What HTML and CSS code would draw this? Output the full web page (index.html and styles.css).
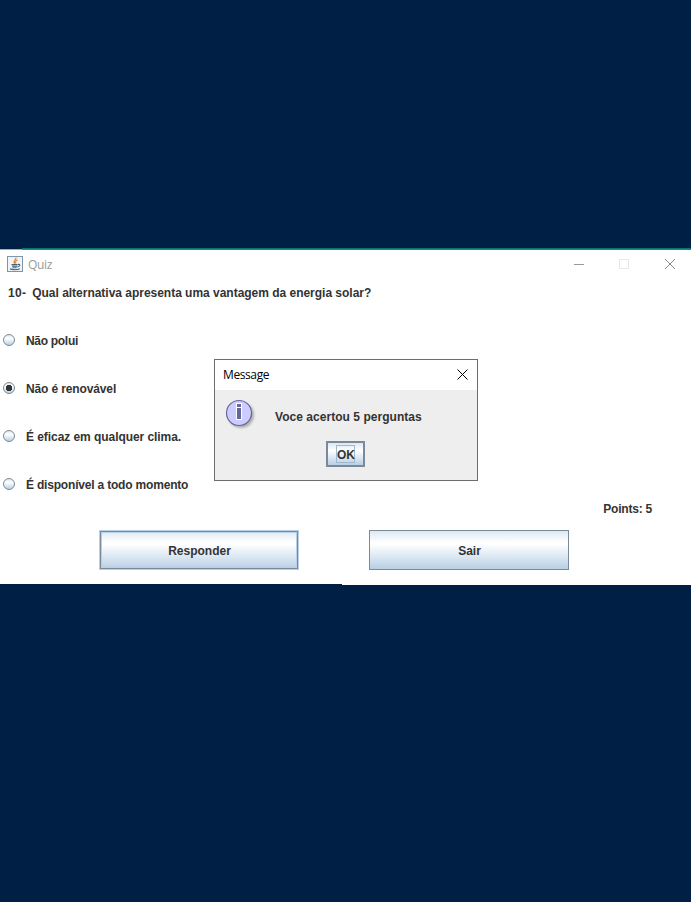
FILE: index.html
```html
<!DOCTYPE html>
<html lang="pt-BR">
<head>
<meta charset="utf-8">
<title>Quiz</title>
<link rel="stylesheet" href="styles.css">
</head>
<body>
<main class="window">
  <header class="titlebar">
    <svg class="app-icon" width="16" height="16" viewBox="0 0 16 16">
      <rect x=".5" y=".5" width="15" height="15" fill="#f1f4f7" stroke="#7b95aa"/>
      <path d="M9 1.6C9.6 3.6 5.6 4.2 7.6 7.6M10.6 3.8C8 5.2 8.2 6 8.8 7.6" fill="none" stroke="#e8842c" stroke-width="1.3"/>
      <path d="M4.5 8.6h6.2M5 10.2h5.2M5.6 11.7h4M3 12.8c2 1.2 7.4 1.2 9.8 0M11 8.4c2.6-.4 2.4 1.8-.6 2.6" fill="none" stroke="#41617c" stroke-width="1.1"/>
    </svg>
    <span class="title">Quiz</span>
    <svg class="controls" width="102" height="12" viewBox="0 0 102 12" fill="none">
      <path d="M0 6.5h10" stroke="#999"/>
      <rect x="45.5" y="1.5" width="9" height="9" stroke="#e8e8e8"/>
      <path d="M91 1l10 10M101 1l-10 10" stroke="#888"/>
    </svg>
  </header>
  <h1 class="question"><span class="number">10-</span><span class="prompt">Qual alternativa apresenta uma vantagem da energia solar?</span></h1>
  <div class="options">
    <label class="option"><i class="radio"></i><span class="o1">Não polui</span></label>
    <label class="option"><i class="radio selected"></i><span class="o2">Não é renovável</span></label>
    <label class="option"><i class="radio"></i><span class="o3">É eficaz em qualquer clima.</span></label>
    <label class="option"><i class="radio"></i><span class="o4">É disponível a todo momento</span></label>
  </div>
  <div class="points">Points: 5</div>
  <div class="actions">
    <button class="button focused">Responder</button>
    <button class="button">Sair</button>
  </div>
  <div class="edge"></div>
</main>
<section class="dialog">
  <header class="dialog-bar">
    <span class="dialog-title">Message</span>
    <svg class="close" width="11" height="11" viewBox="0 0 11 11"><path d="M.5 .5l10 10M10.5 .5l-10 10" fill="none" stroke="#000"/></svg>
  </header>
  <div class="message">
    <svg class="info" width="32" height="32" viewBox="0 0 32 32">
      <defs><filter id="soft" x="-20%" y="-20%" width="140%" height="140%"><feGaussianBlur stdDeviation="1.3"/></filter></defs>
      <circle cx="16" cy="16" r="13" fill="#999" opacity=".75" filter="url(#soft)"/>
      <circle cx="14" cy="14" r="12.5" fill="#ccccff" stroke="#666699" stroke-width="1.2"/>
      <path d="M11 4h6v17h-6z" fill="#fff"/>
      <path d="M12 5h4v3h-4zM12 9h4v11h-4z" fill="#666699"/>
    </svg>
    <span class="message-text">Voce acertou 5 perguntas</span>
  </div>
  <button class="ok"><span>OK</span></button>
</section>
</body>
</html>
```
FILE: styles.css
```css
* { box-sizing: border-box; }
body {
  margin: 0;
  height: 902px;
  padding-top: 248px;
  position: relative;
  overflow: hidden;
  background: #001f44;
  color: #333;
  font: bold 12px/16px "Liberation Sans", Arial, sans-serif;
}
.window {
  height: 337px;
  background: #fff;
  display: flex;
  flex-direction: column;
}
.window::before {
  content: "";
  flex: none;
  height: 2px;
  background:
    linear-gradient(#001f44 1px, #9eabb9 1px) 0 0 / 22px 2px no-repeat,
    linear-gradient(#07756f 1px, #38806f 1px);
}
.titlebar {
  flex: none;
  height: 30px;
  display: flex;
  align-items: center;
  padding: 0 15px 2px 7px;
  font: 12px/16px "Open Sans", sans-serif;
  color: #999;
}
.title { margin: 2px 0 0 5px; letter-spacing: -.3px; }
.controls { margin-left: auto; }
.question {
  margin: 5px 0 0 8px;
  font: inherit;
  display: flex;
  gap: 6px;
  white-space: nowrap;
}
.number { letter-spacing: .3px; }
.prompt { letter-spacing: -.02px; }
.options {
  margin-top: 15px;
  display: flex;
  flex-direction: column;
}
.option {
  height: 48px;
  display: flex;
  align-items: center;
  gap: 11px;
  padding-left: 3px;
}
.option span { padding-top: 2px; }
.o1 { letter-spacing: -.3px; }
.o2 { letter-spacing: -.13px; }
.o3 { letter-spacing: -.06px; }
.o4 { letter-spacing: -.19px; }
.radio {
  width: 12px;
  height: 12px;
  border: 1px solid #7a8a99;
  border-radius: 50%;
  background: linear-gradient(#dde8f3, #fff 35%, #b8cfe5);
}
.selected {
  background: radial-gradient(circle, #333 0 3px, transparent 3.5px), linear-gradient(#dde8f3, #fff 35%, #b8cfe5);
}
.points { margin: -7px 39px 0 auto; letter-spacing: -.22px; }
.actions {
  margin: 13px 0 0 99px;
  display: flex;
  gap: 70px;
}
.button {
  width: 200px;
  height: 40px;
  padding: 2px 0 0 1px;
  border: 1px solid #7a8a99;
  background: linear-gradient(#dde8f3, #fff 30%, #fff 35%, #b8cfe5);
  color: #333;
  font: inherit;
}
.focused {
  border-color: #b8cfe5;
  box-shadow: inset 0 0 0 1px #7a8a99, inset 0 0 0 2px #b8cfe5;
}
.edge {
  width: 342px;
  height: 1px;
  margin-top: auto;
  background: #001f44;
}
.dialog {
  position: absolute;
  left: 214px;
  top: 359px;
  width: 264px;
  height: 122px;
  border: 1px solid #6d6d6d;
  background: #eee;
}
.dialog-bar {
  height: 30px;
  padding: 0 9px 0 8px;
  display: flex;
  justify-content: space-between;
  align-items: center;
  background: #fff;
  color: #000;
  font: 12px/16px "Open Sans", sans-serif;
}
.dialog-title { letter-spacing: -.4px; }
.close { margin-bottom: 2px; }
.message {
  margin: 9px 0 0 10px;
  display: flex;
  align-items: center;
  gap: 18px;
}
.message-text { margin-top: 4px; letter-spacing: .04px; }
.ok {
  display: flex;
  align-items: center;
  justify-content: center;
  width: 39px;
  height: 26px;
  margin: 10px 0 0 111px;
  padding: 0;
  border: 2px solid #7a8a99;
  background: linear-gradient(#dde8f3, #fff 35%, #b8cfe5);
  color: #333;
  font: inherit;
}
.ok span { border: 1px solid #a3b8cc; width: 19px; height: 18px; padding-top: 1px; letter-spacing: -.2px; }
```
